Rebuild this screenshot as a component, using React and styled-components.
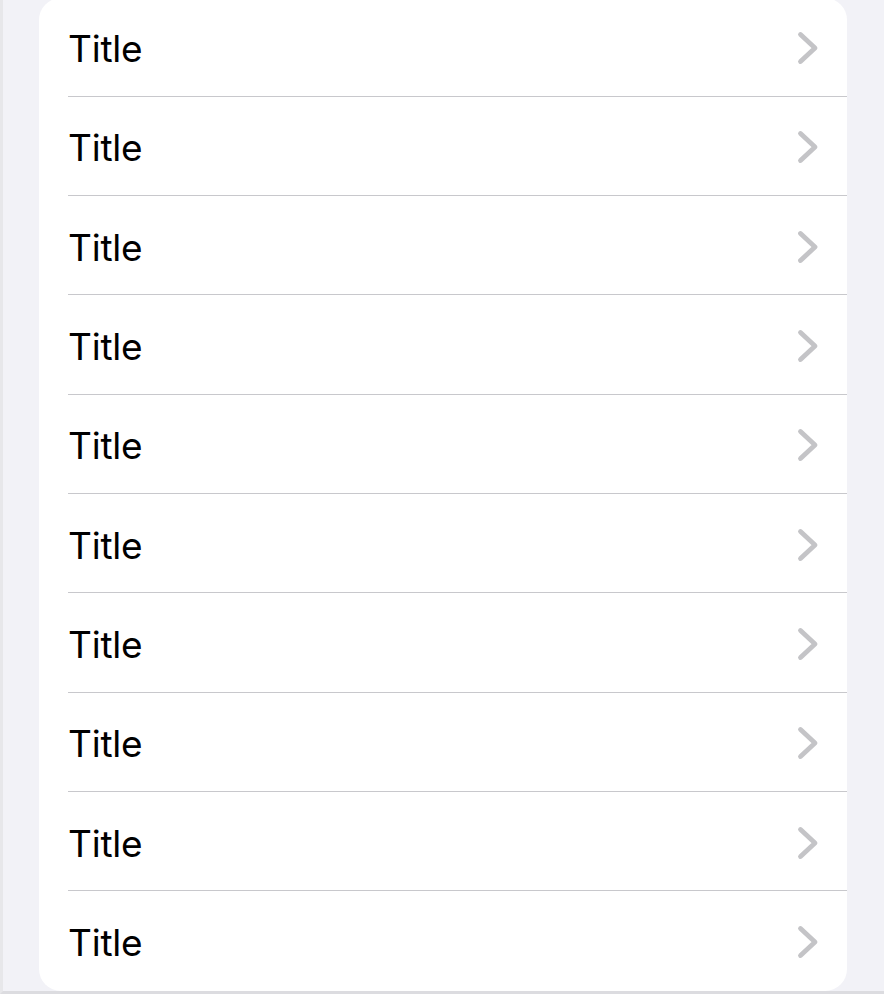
import React from "react";
import styled, { createGlobalStyle } from "styled-components";

const Global = createGlobalStyle`
  html, body { margin: 0; padding: 0; }
  body {
    background: #f2f2f7;
    font-family: Inter, "Noto Sans", "Liberation Sans", sans-serif;
    overflow: hidden;
  }
`;

const Screen = styled.div`
  width: 884px;
  height: 994px;
  box-sizing: border-box;
  border-left: 3px solid #e7e7ea;
  border-bottom: 3px solid #dcdce0;
  background: #f2f2f7;
  overflow: hidden;
  display: flex;
  padding-left: 36px;
`;

const Card = styled.div`
  width: 808px;
  margin-top: -2.5px;
  height: 993px;
  background: #ffffff;
  border-radius: 22px;
  display: flex;
  flex-direction: column;
  overflow: hidden;
`;

const Row = styled.div`
  height: 99.3px;
  flex: 0 0 99.3px;
  box-sizing: border-box;
  margin-left: 29px;
  padding-right: 28px;
  display: flex;
  align-items: center;
  justify-content: space-between;
  border-bottom: ${(p) => (p.$last ? "none" : "1.2px solid #c8c8cc")};
`;

const Label = styled.span`
  font-size: 37px;
  color: #000;
  letter-spacing: -0.2px;
  padding-top: 4px;
`;

const Chevron = () => (
  <svg width="22" height="34" viewBox="0 0 22 34" style={{ marginTop: 3 }}>
    <path
      d="M3.5 3.5 L18 17 L3.5 30.5"
      fill="none"
      stroke="#c4c4c7"
      strokeWidth="4.8"
      strokeLinecap="round"
      strokeLinejoin="round"
    />
  </svg>
);

export default function App() {
  const items = Array.from({ length: 10 }, (_, i) => i);
  return (
    <>
      <Global />
      <Screen>
        <Card>
          {items.map((i) => (
            <Row key={i} $last={i === items.length - 1}>
              <Label>Title</Label>
              <Chevron />
            </Row>
          ))}
        </Card>
      </Screen>
    </>
  );
}
